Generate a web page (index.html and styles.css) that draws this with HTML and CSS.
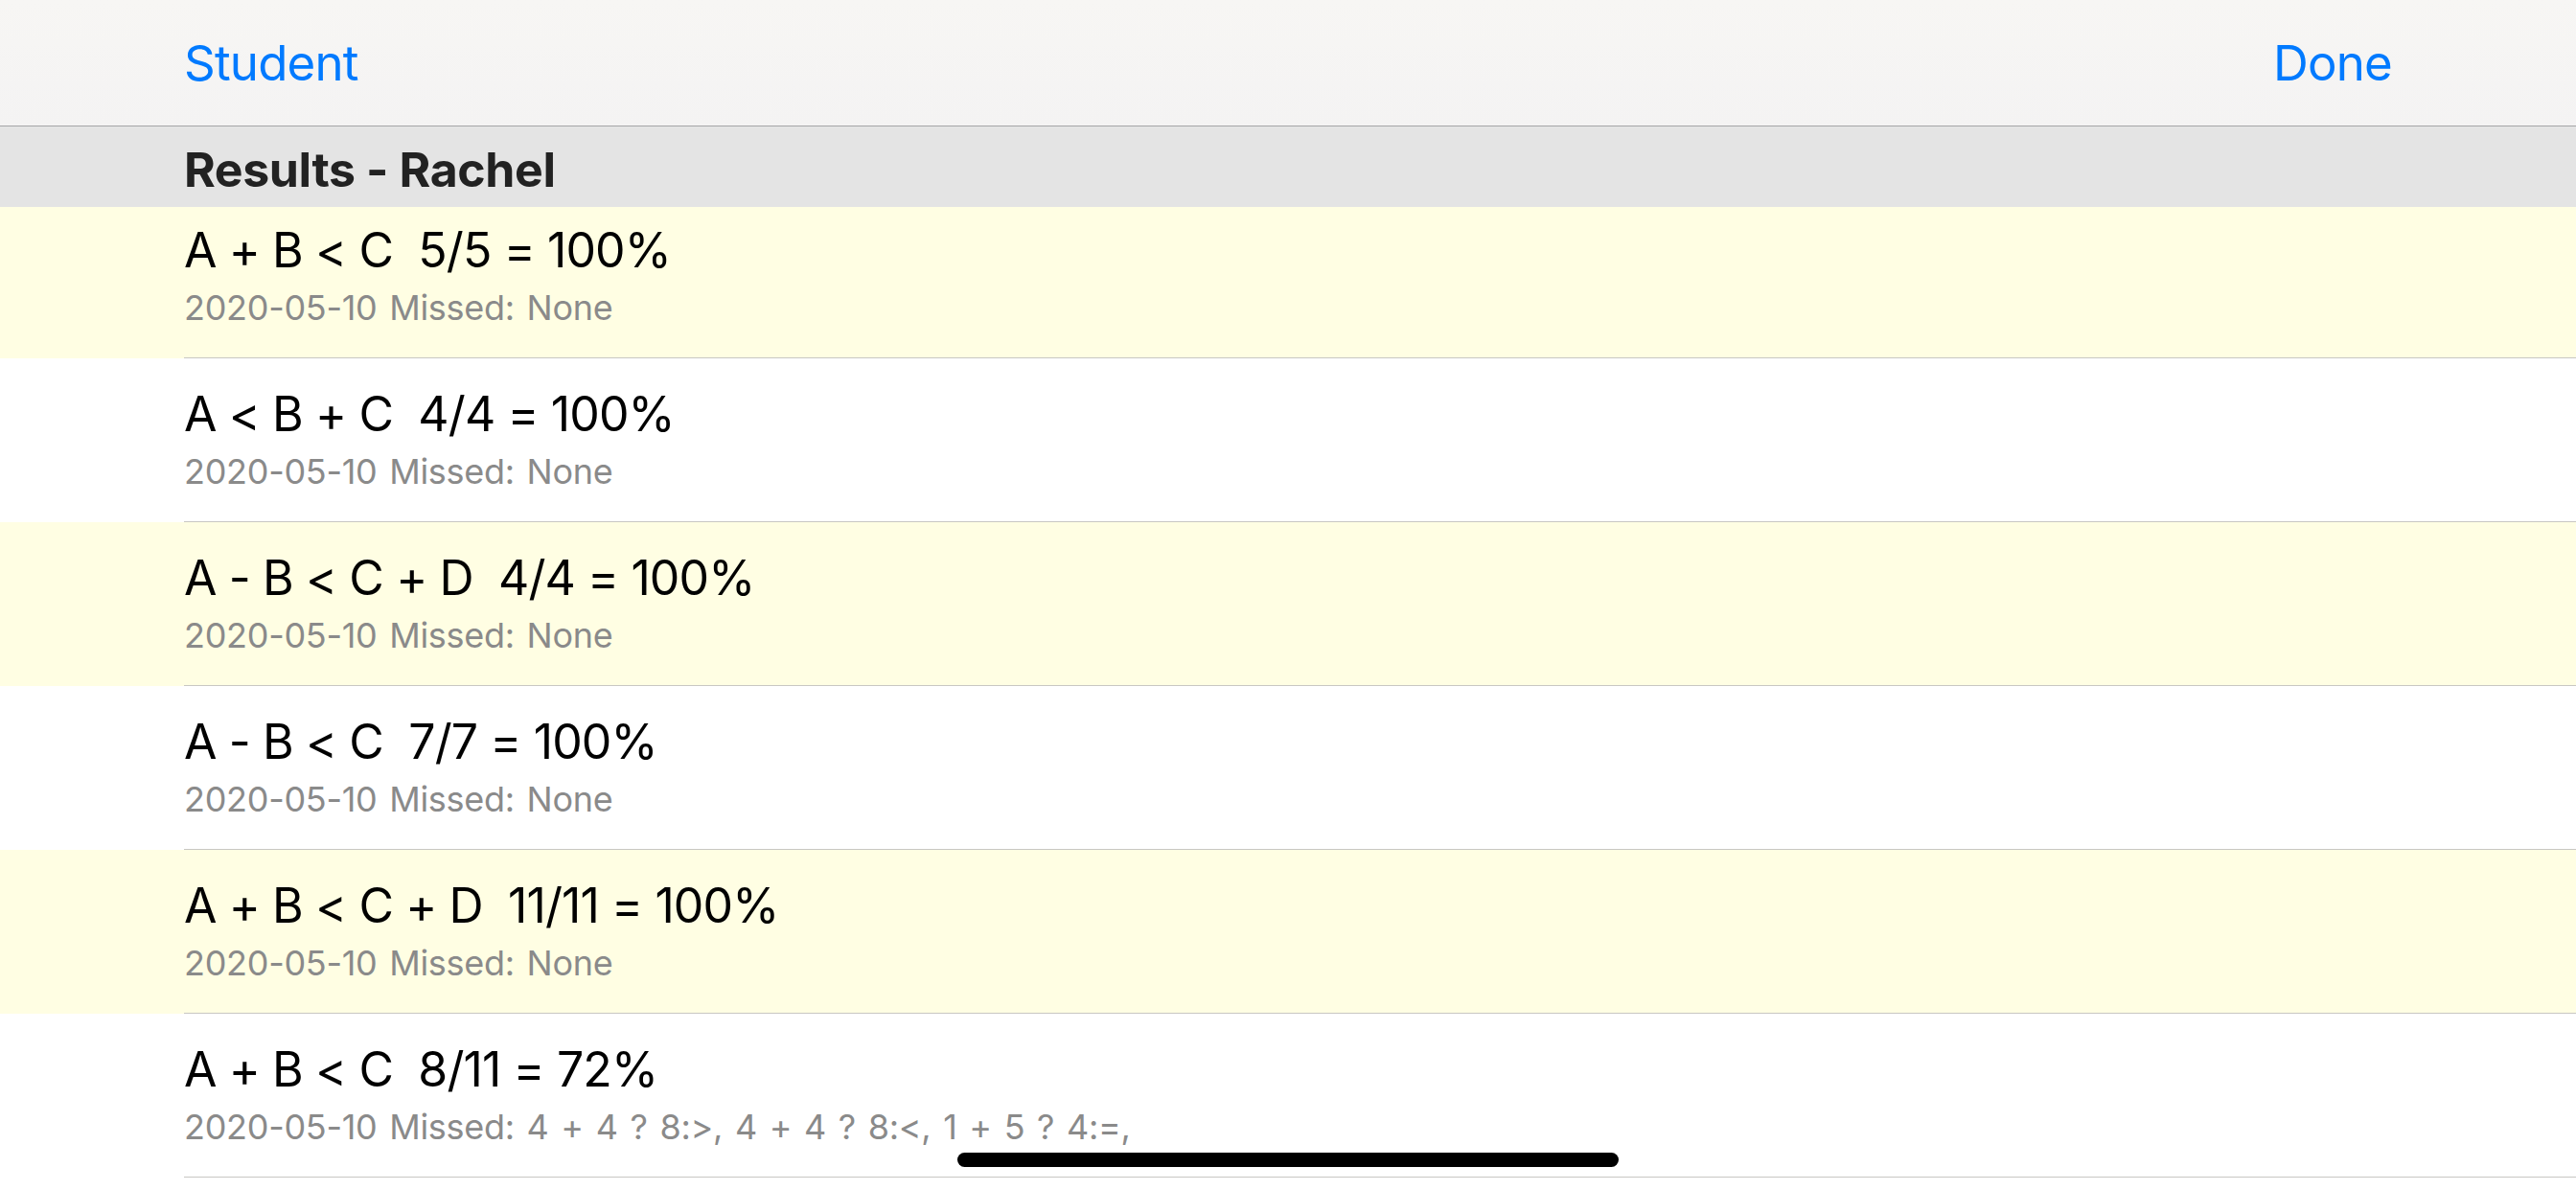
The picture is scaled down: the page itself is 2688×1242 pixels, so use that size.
FILE: index.html
```html
<!DOCTYPE html>
<html lang="en">
<head>
<meta charset="utf-8">
<title>Results - Rachel</title>
<link rel="stylesheet" href="styles.css">
</head>
<body>
<div class="screen">
  <header class="navbar">
    <span class="nav-btn">Student</span>
    <span class="nav-btn">Done</span>
  </header>
  <div class="section-header">Results - Rachel</div>
  <ul class="list">
    <li class="row alt">
      <div class="title">A + B &lt; C  5/5 = 100%</div>
      <div class="detail">2020-05-10 Missed: None</div>
    </li>
    <li class="row">
      <div class="title">A &lt; B + C  4/4 = 100%</div>
      <div class="detail">2020-05-10 Missed: None</div>
    </li>
    <li class="row alt">
      <div class="title">A - B &lt; C + D  4/4 = 100%</div>
      <div class="detail">2020-05-10 Missed: None</div>
    </li>
    <li class="row">
      <div class="title">A - B &lt; C  7/7 = 100%</div>
      <div class="detail">2020-05-10 Missed: None</div>
    </li>
    <li class="row alt">
      <div class="title">A + B &lt; C + D  11/11 = 100%</div>
      <div class="detail">2020-05-10 Missed: None</div>
    </li>
    <li class="row">
      <div class="title">A + B &lt; C  8/11 = 72%</div>
      <div class="detail">2020-05-10 Missed: 4 + 4 ? 8:&gt;, 4 + 4 ? 8:&lt;, 1 + 5 ? 4:=,</div>
    </li>
  </ul>
  <div class="home-indicator"></div>
</div>
</body>
</html>
```
FILE: styles.css
```css
html, body {
  margin: 0;
  padding: 0;
  background: #ffffff;
}
body {
  width: 2688px;
  height: 1242px;
  overflow: hidden;
  font-family: Inter, "Noto Sans", "Liberation Sans", sans-serif;
}
.screen {
  position: relative;
  width: 2688px;
  height: 1242px;
  overflow: hidden;
  background: #ffffff;
}
.navbar {
  position: relative;
  z-index: 2;
  height: 132px;
  box-sizing: border-box;
  border-bottom: 1px solid #a5a5a7;
  background: linear-gradient(#f7f6f4, #f4f3f3);
  display: flex;
  justify-content: space-between;
  align-items: center;
  padding: 0 192px 0 192px;
}
.nav-btn {
  color: #007aff;
  font-size: 51px;
  line-height: 60px;
  letter-spacing: -0.8px;
}
.section-header {
  position: relative;
  z-index: 2;
  height: 84px;
  box-sizing: border-box;
  background: #e4e4e4;
  color: #222222;
  font-weight: 700;
  font-size: 50px;
  line-height: 60px;
  letter-spacing: -0.4px;
  padding: 15px 0 0 192px;
}
.list {
  list-style: none;
  margin: -13px 0 0 0;
  padding: 0;
  position: relative;
  z-index: 1;
}
.row {
  height: 171px;
  box-sizing: border-box;
  padding: 28px 0 0 192px;
  position: relative;
  display: flex;
  flex-direction: column;
  gap: 8px;
  background: #ffffff;
}
.row.alt {
  background: #fffee3;
}
.row::after {
  content: "";
  position: absolute;
  left: 192px;
  right: 0;
  bottom: 0;
  height: 1px;
  background: #c8c7c3;
}
.title {
  white-space: pre;
  color: #000000;
  font-size: 50px;
  line-height: 60px;
  letter-spacing: -0.9px;
}
.detail {
  white-space: pre;
  color: #8a8a8a;
  font-size: 36px;
  line-height: 44px;
  letter-spacing: -0.3px;
  word-spacing: 3px;
}
.home-indicator {
  position: absolute;
  z-index: 3;
  left: 999px;
  top: 1203px;
  width: 690px;
  height: 15px;
  border-radius: 8px;
  background: #000000;
}
```
